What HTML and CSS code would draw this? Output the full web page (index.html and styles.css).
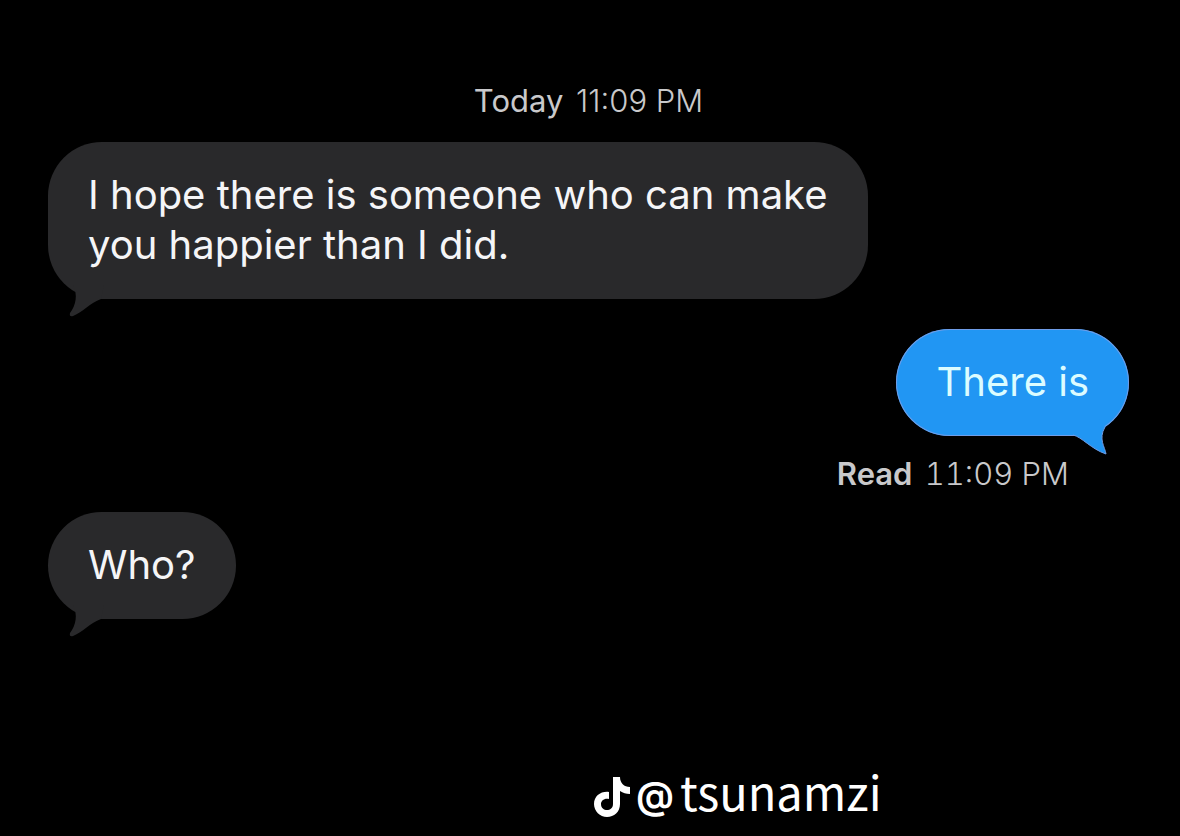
FILE: index.html
```html
<!DOCTYPE html>
<html lang="en">
  <head>
    <meta charset="UTF-8" />
    <meta name="viewport" content="width=device-width, initial-scale=1.0" />
    <title>Messages</title>
    <link rel="stylesheet" href="styles.css" />
  </head>
  <body>
    <main class="chat">
      <div class="stamp"><span class="day">Today</span> 11:09 PM</div>
      <div class="bubble received">
        I hope there is someone who can make<br />you happier than I did.
        <svg class="tail" width="40" height="32" viewBox="0 0 40 32" aria-hidden="true">
          <path d="M5 0 C10 10 8 20 2 28 Q1 32 5 31 C15 27 22 18 33 14 L36 0 Z" fill="#29292b" />
        </svg>
      </div>
      <div class="bubble sent">
        There is
        <svg class="tail" width="40" height="36" viewBox="0 0 40 36" aria-hidden="true">
          <path d="M2 0 L2 16 C11 18 20 30 35 35 C34 28 27 20 34 8 L28 0 Z" fill="#2196f3" />
          <path d="M2 16 C11 18 20 30 35 35 C34 28 27 20 34 8" fill="none" stroke="#6f9de8" />
        </svg>
      </div>
      <div class="receipt"><span class="read">Read</span> 11:09 PM</div>
      <div class="bubble received">
        Who?
        <svg class="tail" width="40" height="32" viewBox="0 0 40 32" aria-hidden="true">
          <path d="M5 0 C10 10 8 20 2 28 Q1 32 5 31 C15 27 22 18 33 14 L36 0 Z" fill="#29292b" />
        </svg>
      </div>
    </main>
    <footer class="watermark">
      <svg class="note" width="36" height="42" viewBox="0 0 36 42" aria-hidden="true">
        <path d="M19 1 H26 C26 7 30 11 36 11 V18 C32 18 29 17 26 15 V28 C26 36 20 41 13 41 C6 41 0 35 0 28 C0 20 7 15 15 16 V23 C10 22 7 25 7 28 C7 32 10 34 13 34 C16 34 19 32 19 28 Z" fill="#fff" />
      </svg>
      <span class="at">@</span>
      <span class="name">tsunamzi</span>
    </footer>
  </body>
</html>
```

FILE: styles.css
```css
body {
  margin: 0;
  min-height: 100vh;
  background-color: #000;
  color: #f5f5f7;
  font-family: "Inter", sans-serif;
  display: flex;
  flex-direction: column;
  justify-content: space-between;
}
.chat {
  display: flex;
  flex-direction: column;
  align-items: flex-start;
  padding: 81px 51px 0 48px;
}
.stamp,
.receipt {
  color: #c9c9cb;
  font-size: 31px;
  font-weight: 300;
  line-height: 40px;
}
.stamp {
  align-self: center;
  margin-bottom: 21px;
}
.day {
  font-weight: 400;
  margin-right: 4px;
}
.read {
  font-weight: 600;
  margin-right: 4px;
}
.bubble {
  position: relative;
  box-sizing: border-box;
  padding: 28px 40px 29px;
  border-radius: 54px;
  font-size: 40px;
  line-height: 50px;
}
.received {
  background-color: #29292b;
}
.sent {
  align-self: flex-end;
  margin-top: 30px;
  background-color: #2196f3;
  color: #dcfcff;
  box-shadow: inset 0 0 0 1px #6f9de8;
}
.tail {
  position: absolute;
}
.received .tail {
  left: 20px;
  bottom: -18px;
}
.sent .tail {
  right: 18px;
  bottom: -19px;
}
.receipt {
  align-self: flex-end;
  margin: 18px 60px 18px 0;
  font-variant-numeric: tabular-nums;
}
.watermark {
  display: flex;
  align-items: center;
  margin-left: 50%;
  padding: 0 4px 7px;
  color: #fff;
  font-family: "Noto Sans CJK SC", sans-serif;
  font-size: 47px;
  line-height: 60px;
}
.note {
  margin-right: 6px;
}
.at {
  font-family: "Inter", sans-serif;
  font-size: 38px;
  font-weight: 600;
  padding-bottom: 4px;
  margin-right: 6px;
}
.name {
  padding-bottom: 12px;
  line-height: 48px;
}
```
